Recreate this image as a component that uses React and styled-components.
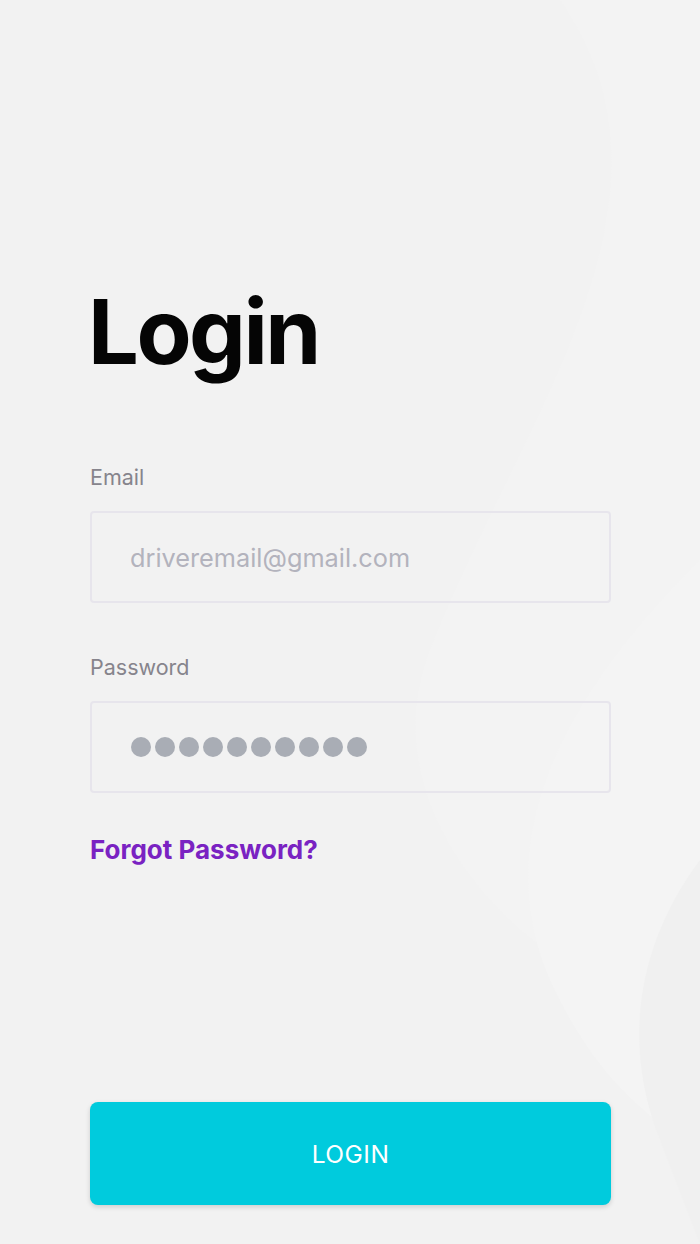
import React from 'react';
import styled, { createGlobalStyle } from 'styled-components';

const GlobalStyle = createGlobalStyle`
  html, body {
    margin: 0;
    padding: 0;
    background: #f2f2f2;
  }
  * {
    box-sizing: border-box;
  }
`;

const Page = styled.div`
  position: relative;
  width: 700px;
  height: 1244px;
  overflow: hidden;
  background: #f2f2f2;
  font-family: Inter, "Liberation Sans", sans-serif;
`;

const Waves = styled.svg`
  position: absolute;
  top: 0;
  left: 0;
  width: 700px;
  height: 1244px;
  pointer-events: none;
`;

const Content = styled.div`
  position: relative;
  display: flex;
  flex-direction: column;
  height: 100%;
  padding: 287px 89px 39px 90px;
`;

const Title = styled.h1`
  margin: 0 0 0 -2px;
  font-size: 90px;
  line-height: 1;
  font-weight: 700;
  letter-spacing: -2.5px;
  color: #050505;
`;

const Field = styled.div`
  display: flex;
  flex-direction: column;
  margin-top: ${(p) => p.$top}px;
`;

const Label = styled.label`
  font-size: 21.5px;
  line-height: 24px;
  color: #86848c;
  margin-bottom: 22px;
`;

const InputBox = styled.div`
  display: flex;
  align-items: center;
  height: 92px;
  padding: 0 38px;
  border: 2px solid #e7e5ec;
  border-radius: 4px;
`;

const Placeholder = styled.span`
  font-size: 25.3px;
  color: #b3b3bd;
`;

const Dots = styled.div`
  display: flex;
  gap: 4px;
  margin-left: 1px;
`;

const Dot = styled.span`
  width: 20px;
  height: 20px;
  border-radius: 50%;
  background: #a9adb5;
`;

const Forgot = styled.a`
  margin-top: 42px;
  font-size: 26px;
  line-height: 30px;
  font-weight: 700;
  color: #7a22c2;
  text-decoration: none;
`;

const Button = styled.button`
  margin-top: auto;
  height: 103px;
  width: 100%;
  border: none;
  border-radius: 8px;
  background: #00cbdd;
  color: #ffffff;
  font-family: Inter, "Liberation Sans", sans-serif;
  font-size: 24.5px;
  letter-spacing: 0.5px;
  box-shadow: 0 2px 5px rgba(0, 0, 0, 0.15);
`;

const App = () => {
  return (
    <>
      <GlobalStyle />
      <Page>
        <Waves viewBox="0 0 700 1244">
          <path d="M560 0 C 700 200, 520 420, 430 650 C 380 780, 470 900, 560 960 L 700 1050 L 700 0 Z" fill="#f3f3f3" />
          <path d="M700 560 C 560 700, 480 850, 560 1000 C 600 1080, 650 1120, 700 1150 Z" fill="#f4f4f4" />
          <path d="M700 860 C 640 940, 620 1040, 660 1140 L 700 1244 Z" fill="#f0f0f0" />
        </Waves>
        <Content>
          <Title>Login</Title>
          <Field $top={88}>
            <Label>Email</Label>
            <InputBox>
              <Placeholder>driveremail@gmail.com</Placeholder>
            </InputBox>
          </Field>
          <Field $top={52}>
            <Label>Password</Label>
            <InputBox>
              <Dots>
                {Array.from({ length: 10 }).map((_, i) => (
                  <Dot key={i} />
                ))}
              </Dots>
            </InputBox>
          </Field>
          <Forgot href="#">Forgot Password?</Forgot>
          <Button>LOGIN</Button>
        </Content>
      </Page>
    </>
  );
};

export default App;
